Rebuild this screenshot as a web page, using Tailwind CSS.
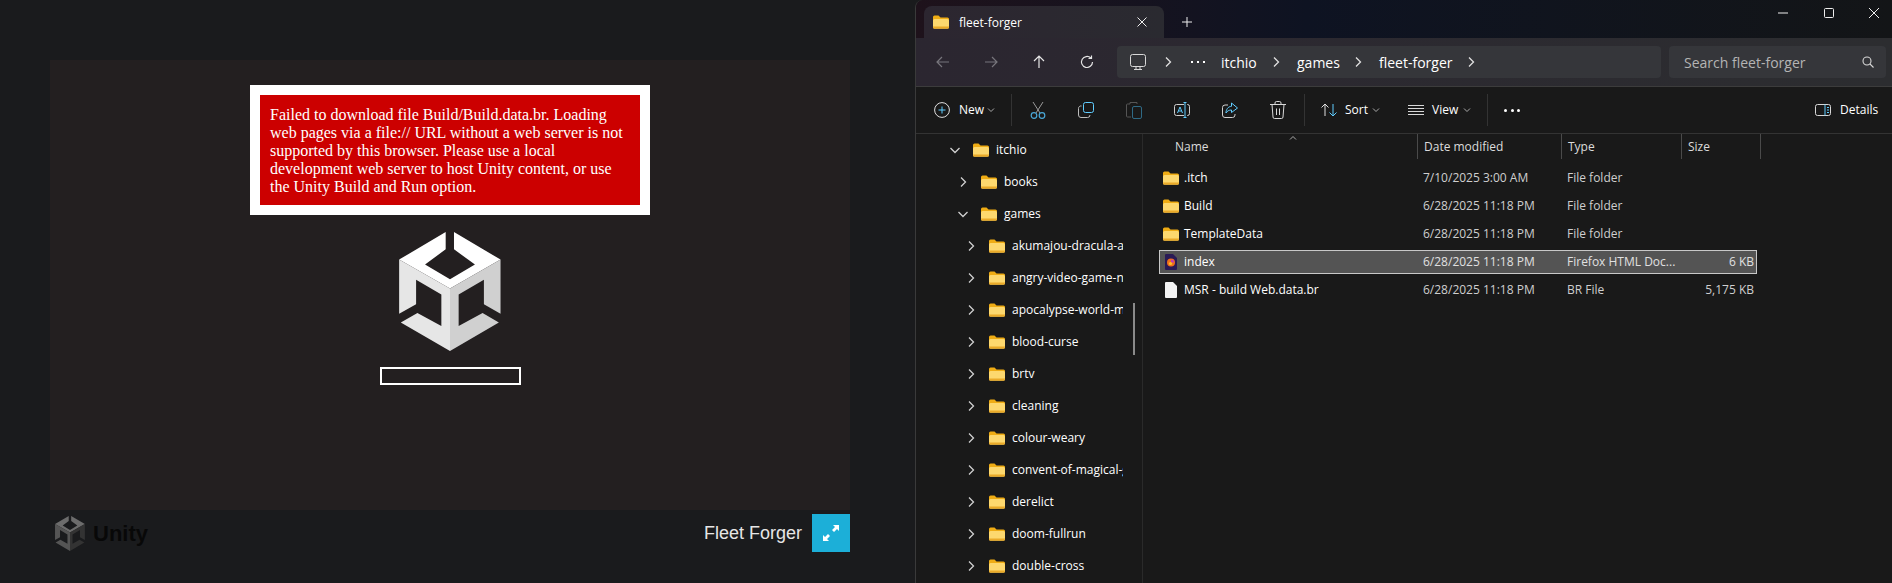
<!DOCTYPE html>
<html lang="en">
<head>
  <meta charset="utf-8" />
  <title>Fleet Forger</title>
  <script src="https://cdn.jsdelivr.net/npm/@tailwindcss/browser@4"></script>
</head>
<body class="h-[583px] w-[1892px] overflow-hidden flex bg-[#1a1b1d] font-['Open_Sans',sans-serif]">

  <!-- icon defs -->
  <svg class="hidden">
    <symbol id="folder" viewBox="0 0 16 14">
      <path d="M0 2a1.500 1.500 0 0 1 1.500-1.500h4l2 2h7a1.500 1.500 0 0 1 1.500 1.500v8a1.500 1.500 0 0 1-1.500 1.500h-13a1.500 1.500 0 0 1-1.500-1.500z" fill="#efac14"/>
      <path d="M0 5.500a1.500 1.500 0 0 1 1.500-1.500h13a1.500 1.500 0 0 1 1.500 1.500v6.500a1.500 1.500 0 0 1-1.500 1.500h-13a1.500 1.500 0 0 1-1.500-1.500z" fill="#fdd86e"/>
      <path d="M0 12a1.500 1.500 0 0 0 1.500 1.500h13a1.500 1.500 0 0 0 1.500-1.500v-.6h-16z" fill="#eaa928"/>
    </symbol>
    <symbol id="right" viewBox="0 0 12 12">
      <path d="M4 1.500 8.500 6 4 10.500" fill="none" stroke="currentColor" stroke-width="1.300"/>
    </symbol>
    <symbol id="down" viewBox="0 0 12 12">
      <path d="M1.500 4 6 8.500 10.500 4" fill="none" stroke="currentColor" stroke-width="1.300"/>
    </symbol>
    <symbol id="caret" viewBox="0 0 8 8">
      <path d="M1 2.500 4 5.500 7 2.500" fill="none" stroke="currentColor" stroke-width="1"/>
    </symbol>
  </svg>

  <!-- unity player ---------------------------------------------->
  <div class="w-[915px] shrink-0 pt-[60px] pl-[50px]">
    <div class="w-[800px] h-[450px] bg-[#231f20] flex flex-col items-center">
      <div class="mt-[25px] w-[400px] p-[10px] bg-white">
        <div class="bg-[#cc0000] px-[10px] pt-[11px] pb-[9px] text-white text-[16px] leading-[18px] font-['Liberation_Serif',serif]">
          Failed to download file Build/Build.data.br. Loading web pages via a file:// URL without a web server is not supported by this browser. Please use a local development web server to host Unity content, or use the Unity Build and Run option.
        </div>
      </div>
      <svg class="mt-[17px]" width="102" height="119" viewBox="57 20 306 358">
        <path d="M197 20V72L135 118 210 162 285 118 222 72V20L362 103 210 190 57 103Z" fill="#fff"/>
        <path d="M57 103 210 190V378L62 292 112 264 184 303V208L108 164V237L57 266Z" fill="#e6e6e6"/>
        <path d="M362 103 210 190V378L357 292 308 264 236 303V208L312 164V237L362 266Z" fill="#d0d0d0"/>
      </svg>
      <div class="mt-[16px] w-[141px] h-[18px] border-2 border-white"></div>
    </div>
    <div class="w-[800px] h-[38px] mt-[4px] flex items-center">
      <svg class="ml-[5px] mt-[1px]" width="30" height="35" viewBox="57 20 306 358">
        <path d="M197 20V72L135 118 210 162 285 118 222 72V20L362 103 210 190 57 103Z" fill="#6c6c6c"/>
        <path d="M57 103 210 190V378L62 292 112 264 184 303V208L108 164V237L57 266Z" fill="#555"/>
        <path d="M362 103 210 190V378L357 292 308 264 236 303V208L312 164V237L362 266Z" fill="#333"/>
      </svg>
      <span class="ml-[8px] text-[22px] font-bold text-[#080808] font-['Liberation_Sans',sans-serif]">Unity</span>
      <span class="ml-auto text-[18px] text-[#e6e6e6] font-['Liberation_Sans',sans-serif]">Fleet Forger</span>
      <div class="ml-[10px] w-[38px] h-[38px] bg-[#1cafd8]">
        <svg width="38" height="38" viewBox="0 0 38 38" fill="#fff">
          <path d="M21 11H27V17L25 15 22 18 20 16 23 13Z"/>
          <path d="M17 27H11V21L13 23 16 20 18 22 15 25Z"/>
        </svg>
      </div>
    </div>
  </div>

  <!-- explorer window ------------------------------------------->
  <div class="flex-1 flex flex-col border-l border-[#3a3a3a] rounded-tl-lg overflow-hidden text-white text-[12px]">

    <!-- title bar -->
    <div class="h-[38px] shrink-0 flex items-end pl-[8px] bg-linear-to-r from-[#1e121b] via-[#0e1322] via-40% to-[#131517]">
      <div class="w-[240px] h-[32px] rounded-t-lg flex items-center pl-[9px] bg-linear-to-r from-[#2c2630] to-[#2a2a30]">
        <svg class="w-4 h-[14px]"><use href="#folder"/></svg>
        <span class="ml-[10px] mt-[1px] font-medium">fleet-forger</span>
        <svg class="ml-auto mr-[17px]" width="10" height="10" viewBox="0 0 10 10"><path d="M.5.5l9 9M9.500.5l-9 9" stroke="#eee" stroke-width="1"/></svg>
      </div>
      <svg class="ml-[18px] mb-[11px]" width="10" height="10" viewBox="0 0 10 10"><path d="M5 0v10M0 5h10" stroke="#eee" stroke-width="1"/></svg>
      <div class="ml-auto self-start flex mt-[8px] mr-[13px]">
        <svg width="10" height="10" viewBox="0 0 10 10"><path d="M0 5h10" stroke="#eee"/></svg>
        <svg class="ml-[36px]" width="10" height="10" viewBox="0 0 10 10"><rect x=".5" y=".5" width="9" height="9" rx="1" fill="none" stroke="#eee"/></svg>
        <svg class="ml-[35px]" width="10" height="10" viewBox="0 0 10 10"><path d="M0 0l10 10M10 0 0 10" stroke="#eee"/></svg>
      </div>
    </div>

    <!-- address row -->
    <div class="h-[49px] shrink-0 flex items-center pl-[3px] pr-[6px] border-b border-[#3c3c3c] bg-linear-to-r from-[#2b2630] to-[#2c2d30]">
      <div class="w-[48px] flex justify-center"><svg width="16" height="16" viewBox="0 0 16 16" fill="none" stroke="#77757c" stroke-width="1.200"><path d="M14 8H2M7 3 2 8l5 5"/></svg></div>
      <div class="w-[48px] flex justify-center"><svg width="16" height="16" viewBox="0 0 16 16" fill="none" stroke="#77757c" stroke-width="1.200"><path d="M2 8h12M9 3l5 5-5 5"/></svg></div>
      <div class="w-[48px] flex justify-center"><svg width="16" height="16" viewBox="0 0 16 16" fill="none" stroke="#e6e6e6" stroke-width="1.200"><path d="M8 14V2M3 7l5-5 5 5"/></svg></div>
      <div class="w-[48px] flex justify-center"><svg width="16" height="16" viewBox="0 0 16 16" fill="none" stroke="#e6e6e6" stroke-width="1.200"><path d="M13.500 8a5.500 5.500 0 1 1-1.700-4M12.500 1.500V4.500H9.500"/></svg></div>
      <div class="ml-[6px] flex-1 h-[32px] rounded bg-[#35363a] flex items-center pl-[13px] text-[14px]">
        <svg width="16" height="16" viewBox="0 0 16 16" fill="none" stroke="#d8d8d8" stroke-width="1"><rect x=".5" y=".5" width="15" height="12" rx="2"/><path d="M4 15.500h8M6 13v2M10 13v2"/></svg>
        <svg class="ml-[16px] text-[#e0e0e0]" width="12" height="12"><use href="#right"/></svg>
        <span class="ml-[17px] w-[14px] flex justify-between"><i class="w-[2px] h-[2px] bg-white"></i><i class="w-[2px] h-[2px] bg-white"></i><i class="w-[2px] h-[2px] bg-white"></i></span>
        <span class="ml-[16px] w-[33px]">itchio</span>
        <svg class="ml-[16px] text-[#e0e0e0]" width="12" height="12"><use href="#right"/></svg>
        <span class="ml-[15px] w-[40px]">games</span>
        <svg class="ml-[15px] text-[#e0e0e0]" width="12" height="12"><use href="#right"/></svg>
        <span class="ml-[15px] w-[71px] whitespace-nowrap">fleet-forger</span>
        <svg class="ml-[15px] text-[#e0e0e0]" width="12" height="12"><use href="#right"/></svg>
      </div>
      <div class="ml-[8px] w-[217px] h-[32px] rounded bg-[#35363a] flex items-center pl-[15px] pr-[12px] text-[14px] text-[#b4b4b4]">
        <span>Search fleet-forger</span>
        <svg class="ml-auto" width="12" height="12" viewBox="0 0 12 12" fill="none" stroke="#d8d8d8" stroke-width="1.100"><circle cx="5" cy="5" r="4"/><path d="M8 8l3.500 3.500"/></svg>
      </div>
    </div>

    <!-- toolbar -->
    <div class="h-[47px] shrink-0 flex items-center bg-[#191919] border-b border-[#333]">
      <svg class="ml-[18px]" width="16" height="16" viewBox="0 0 16 16" fill="none"><circle cx="8" cy="8" r="7.400" stroke="#e0e0e0"/><path d="M8 4.500v7M4.500 8h7" stroke="#60cdff"/></svg>
      <span class="ml-[9px] w-[23px]">New</span>
      <svg class="ml-[5px] text-[#aaa]" width="8" height="8"><use href="#caret"/></svg>
      <div class="ml-[16px] w-px h-[32px] bg-[#333]"></div>
      <div class="ml-[2px] w-[48px] flex justify-center"><svg width="16" height="18" viewBox="0 0 16 18" fill="none"><path d="M3 1 10 12M13 1 6 12" stroke="#9a9a9a"/><circle cx="4" cy="14.500" r="2.800" stroke="#4aa8d8" stroke-width="1.200"/><circle cx="12" cy="14.500" r="2.800" stroke="#4aa8d8" stroke-width="1.200"/></svg></div>
      <div class="w-[48px] flex justify-center"><svg width="16" height="16" viewBox="0 0 16 16" fill="none"><rect x="5.500" y=".5" width="10" height="10" rx="2" stroke="#60cdff"/><path d="M3.500 4A2.500 2.500 0 0 0 .5 6.500v6.500a2.500 2.500 0 0 0 2.500 2.500h6.500a2.500 2.500 0 0 0 2.500-2.500" stroke="#bdbdbd"/></svg></div>
      <div class="w-[48px] flex justify-center"><svg width="16" height="18" viewBox="0 0 16 18" fill="none"><path d="M11 3V1.500H4V3H1.500A1 1 0 0 0 .5 4v11a1 1 0 0 0 1 1H5" stroke="#555"/><rect x="6.500" y="5.500" width="9" height="12" rx="1.500" stroke="#2f6a85"/></svg></div>
      <div class="w-[48px] flex justify-center"><svg width="16" height="16" viewBox="0 0 16 16" fill="none"><path d="M10 2.500H2.500a2 2 0 0 0-2 2v7a2 2 0 0 0 2 2H10M13 2.500h.5a2 2 0 0 1 2 2v7a2 2 0 0 1-2 2H13" stroke="#cfcfcf"/><path d="M9.500.5h3M9.500 15.500h3M11 .5v15M3.500 11 6 5l2.500 6M4.400 9h3.200" stroke="#60cdff"/></svg></div>
      <div class="w-[48px] flex justify-center"><svg width="16" height="16" viewBox="0 0 16 16" fill="none"><path d="M6 3H3A2.500 2.500 0 0 0 .5 5.500v7.500A2.500 2.500 0 0 0 3 15.500h7.500A2.500 2.500 0 0 0 13 13v-1" stroke="#d0d0d0"/><path d="M9.500 1 15.500 6 9.500 10.500V8C7 8 5 9 4 11 4 7.500 6 4.500 9.500 4.300Z" stroke="#60cdff"/></svg></div>
      <div class="w-[48px] flex justify-center"><svg width="16" height="18" viewBox="0 0 16 18" fill="none" stroke="#d8d8d8"><path d="M0 3.500h16M5 3.500V2a1.500 1.500 0 0 1 1.500-1.500h3A1.500 1.500 0 0 1 11 2v1.500M2 3.500l1 12.500a1.500 1.500 0 0 0 1.500 1.500h7a1.500 1.500 0 0 0 1.500-1.500L14 3.500M6.500 7.500v6.500M9.500 7.500v6.500"/></svg></div>
      <div class="ml-[2px] w-px h-[32px] bg-[#333]"></div>
      <svg class="ml-[16px]" width="16" height="14" viewBox="0 0 16 14" fill="none"><path d="M4 13V1M.5 4.500 4 1l3.500 3.500" stroke="#e0e0e0"/><path d="M12 1v12M8.500 9.500 12 13l3.500-3.500" stroke="#60cdff"/></svg>
      <span class="ml-[8px] w-[22px]">Sort</span>
      <svg class="ml-[5px] text-[#aaa]" width="8" height="8"><use href="#caret"/></svg>
      <svg class="ml-[28px]" width="16" height="11" viewBox="0 0 16 11" stroke="#d8d8d8"><path d="M0 .5h16M0 3.500h16M0 6.500h16M0 9.500h16"/></svg>
      <span class="ml-[8px] w-[26px]">View</span>
      <svg class="ml-[5px] text-[#aaa]" width="8" height="8"><use href="#caret"/></svg>
      <div class="ml-[16px] w-px h-[32px] bg-[#333]"></div>
      <div class="ml-[16px] w-[16px] flex justify-between"><i class="w-[3px] h-[3px] rounded-full bg-white"></i><i class="w-[3px] h-[3px] rounded-full bg-white"></i><i class="w-[3px] h-[3px] rounded-full bg-white"></i></div>
      <svg class="ml-auto" width="16" height="12" viewBox="0 0 16 12" fill="none"><rect x=".5" y=".5" width="15" height="11" rx="2" stroke="#d8d8d8"/><path d="M10 .5v11M12 3.500h2M12 6h2M12 8.500h2" stroke="#60cdff"/></svg>
      <span class="ml-[9px] mr-[17px] w-[35px]">Details</span>
    </div>

    <!-- content -->
    <div class="flex-1 flex bg-[#191919] overflow-hidden">

      <!-- nav tree -->
      <div class="relative w-[227px] shrink-0 border-r border-[#2a2a2a]">
        <div class="w-[207px] h-[32px] pl-[33px] flex items-center overflow-hidden whitespace-nowrap"><svg class="w-3 h-3 shrink-0 text-[#d0d0d0]"><use href="#down"/></svg><svg class="ml-[12px] w-4 h-[14px] shrink-0"><use href="#folder"/></svg><span class="ml-[7px]">itchio</span></div>
        <div class="w-[207px] h-[32px] pl-[41px] flex items-center overflow-hidden whitespace-nowrap"><svg class="w-3 h-3 shrink-0 text-[#d0d0d0]"><use href="#right"/></svg><svg class="ml-[12px] w-4 h-[14px] shrink-0"><use href="#folder"/></svg><span class="ml-[7px]">books</span></div>
        <div class="w-[207px] h-[32px] pl-[41px] flex items-center overflow-hidden whitespace-nowrap"><svg class="w-3 h-3 shrink-0 text-[#d0d0d0]"><use href="#down"/></svg><svg class="ml-[12px] w-4 h-[14px] shrink-0"><use href="#folder"/></svg><span class="ml-[7px]">games</span></div>
        <div class="w-[207px] h-[32px] pl-[49px] flex items-center overflow-hidden whitespace-nowrap"><svg class="w-3 h-3 shrink-0 text-[#d0d0d0]"><use href="#right"/></svg><svg class="ml-[12px] w-4 h-[14px] shrink-0"><use href="#folder"/></svg><span class="ml-[7px]">akumajou-dracula-agony</span></div>
        <div class="w-[207px] h-[32px] pl-[49px] flex items-center overflow-hidden whitespace-nowrap"><svg class="w-3 h-3 shrink-0 text-[#d0d0d0]"><use href="#right"/></svg><svg class="ml-[12px] w-4 h-[14px] shrink-0"><use href="#folder"/></svg><span class="ml-[7px]">angry-video-game-nerd</span></div>
        <div class="w-[207px] h-[32px] pl-[49px] flex items-center overflow-hidden whitespace-nowrap"><svg class="w-3 h-3 shrink-0 text-[#d0d0d0]"><use href="#right"/></svg><svg class="ml-[12px] w-4 h-[14px] shrink-0"><use href="#folder"/></svg><span class="ml-[7px]">apocalypse-world-mod</span></div>
        <div class="w-[207px] h-[32px] pl-[49px] flex items-center overflow-hidden whitespace-nowrap"><svg class="w-3 h-3 shrink-0 text-[#d0d0d0]"><use href="#right"/></svg><svg class="ml-[12px] w-4 h-[14px] shrink-0"><use href="#folder"/></svg><span class="ml-[7px]">blood-curse</span></div>
        <div class="w-[207px] h-[32px] pl-[49px] flex items-center overflow-hidden whitespace-nowrap"><svg class="w-3 h-3 shrink-0 text-[#d0d0d0]"><use href="#right"/></svg><svg class="ml-[12px] w-4 h-[14px] shrink-0"><use href="#folder"/></svg><span class="ml-[7px]">brtv</span></div>
        <div class="w-[207px] h-[32px] pl-[49px] flex items-center overflow-hidden whitespace-nowrap"><svg class="w-3 h-3 shrink-0 text-[#d0d0d0]"><use href="#right"/></svg><svg class="ml-[12px] w-4 h-[14px] shrink-0"><use href="#folder"/></svg><span class="ml-[7px]">cleaning</span></div>
        <div class="w-[207px] h-[32px] pl-[49px] flex items-center overflow-hidden whitespace-nowrap"><svg class="w-3 h-3 shrink-0 text-[#d0d0d0]"><use href="#right"/></svg><svg class="ml-[12px] w-4 h-[14px] shrink-0"><use href="#folder"/></svg><span class="ml-[7px]">colour-weary</span></div>
        <div class="w-[207px] h-[32px] pl-[49px] flex items-center overflow-hidden whitespace-nowrap"><svg class="w-3 h-3 shrink-0 text-[#d0d0d0]"><use href="#right"/></svg><svg class="ml-[12px] w-4 h-[14px] shrink-0"><use href="#folder"/></svg><span class="ml-[7px]">convent-of-magical-girls</span></div>
        <div class="w-[207px] h-[32px] pl-[49px] flex items-center overflow-hidden whitespace-nowrap"><svg class="w-3 h-3 shrink-0 text-[#d0d0d0]"><use href="#right"/></svg><svg class="ml-[12px] w-4 h-[14px] shrink-0"><use href="#folder"/></svg><span class="ml-[7px]">derelict</span></div>
        <div class="w-[207px] h-[32px] pl-[49px] flex items-center overflow-hidden whitespace-nowrap"><svg class="w-3 h-3 shrink-0 text-[#d0d0d0]"><use href="#right"/></svg><svg class="ml-[12px] w-4 h-[14px] shrink-0"><use href="#folder"/></svg><span class="ml-[7px]">doom-fullrun</span></div>
        <div class="w-[207px] h-[32px] pl-[49px] flex items-center overflow-hidden whitespace-nowrap"><svg class="w-3 h-3 shrink-0 text-[#d0d0d0]"><use href="#right"/></svg><svg class="ml-[12px] w-4 h-[14px] shrink-0"><use href="#folder"/></svg><span class="ml-[7px]">double-cross</span></div>
        <!-- scrollbar thumb -->
        <div class="absolute left-[217px] top-[169px] w-[2px] h-[52px] bg-[#8a8a8a]"></div>
      </div>

      <!-- file list -->
      <div class="flex-1 min-w-0">
        <div class="relative flex h-[25px] items-center text-[#dcdcdc]">
          <span class="w-[274px] pl-[32px]">Name</span>
          <span class="w-[144px] h-full flex items-center pl-[6px] border-l border-[#4a4a4a]">Date modified</span>
          <span class="w-[120px] h-full flex items-center pl-[6px] border-l border-[#4a4a4a]">Type</span>
          <span class="w-[80px] h-full flex items-center pl-[6px] border-x border-[#4a4a4a]">Size</span>
          <svg class="absolute left-[145px] top-0 text-[#aaa] rotate-180" width="10" height="8" viewBox="0 0 8 8"><path d="M1 2.500 4 5.500 7 2.500" fill="none" stroke="currentColor"/></svg>
        </div>
        <div class="mt-[7px] ml-[16px] w-[598px] flex flex-col gap-[4px]">
          <div class="h-[24px] flex items-center border border-transparent"><svg class="ml-[3px] w-4 h-[14px]"><use href="#folder"/></svg><span class="ml-[5px] w-[239px]">.itch</span><span class="w-[144px] text-[#cfcfcf]">7/10/2025 3:00 AM</span><span class="w-[120px] text-[#cfcfcf]">File folder</span></div>
          <div class="h-[24px] flex items-center border border-transparent"><svg class="ml-[3px] w-4 h-[14px]"><use href="#folder"/></svg><span class="ml-[5px] w-[239px]">Build</span><span class="w-[144px] text-[#cfcfcf]">6/28/2025 11:18 PM</span><span class="w-[120px] text-[#cfcfcf]">File folder</span></div>
          <div class="h-[24px] flex items-center border border-transparent"><svg class="ml-[3px] w-4 h-[14px]"><use href="#folder"/></svg><span class="ml-[5px] w-[239px]">TemplateData</span><span class="w-[144px] text-[#cfcfcf]">6/28/2025 11:18 PM</span><span class="w-[120px] text-[#cfcfcf]">File folder</span></div>
          <div class="h-[24px] flex items-center border border-[#c8c8c8] bg-[#545454]">
            <svg class="ml-[5px] w-[12px] h-[16px]" viewBox="0 0 12 16"><path d="M1 0h7l4 4v11a1 1 0 0 1-1 1H1a1 1 0 0 1-1-1V1a1 1 0 0 1 1-1z" fill="#2a1a55"/><circle cx="6" cy="8.500" r="4" fill="#f0701a"/><path d="M6 5.500a3 3 0 0 1 3 3H6z" fill="#c43ab0"/><circle cx="5.500" cy="9.500" r="1.600" fill="#ffc02a"/></svg>
            <span class="ml-[7px] w-[239px]">index</span><span class="w-[144px] text-[#e0e0e0]">6/28/2025 11:18 PM</span><span class="w-[120px] text-[#e0e0e0] whitespace-nowrap">Firefox HTML Doc...</span><span class="ml-auto mr-[2px] text-[#e0e0e0]">6 KB</span>
          </div>
          <div class="h-[24px] flex items-center border border-transparent">
            <svg class="ml-[5px] w-[12px] h-[16px]" viewBox="0 0 12 16"><path d="M1 0h7l4 4v11a1 1 0 0 1-1 1H1a1 1 0 0 1-1-1V1a1 1 0 0 1 1-1z" fill="#f4f4f4"/></svg>
            <span class="ml-[7px] w-[239px] whitespace-nowrap">MSR - build Web.data.br</span><span class="w-[144px] text-[#cfcfcf]">6/28/2025 11:18 PM</span><span class="w-[120px] text-[#cfcfcf]">BR File</span><span class="ml-auto mr-[2px] text-[#cfcfcf]">5,175 KB</span>
          </div>
        </div>
      </div>
    </div>
  </div>
</body>
</html>
